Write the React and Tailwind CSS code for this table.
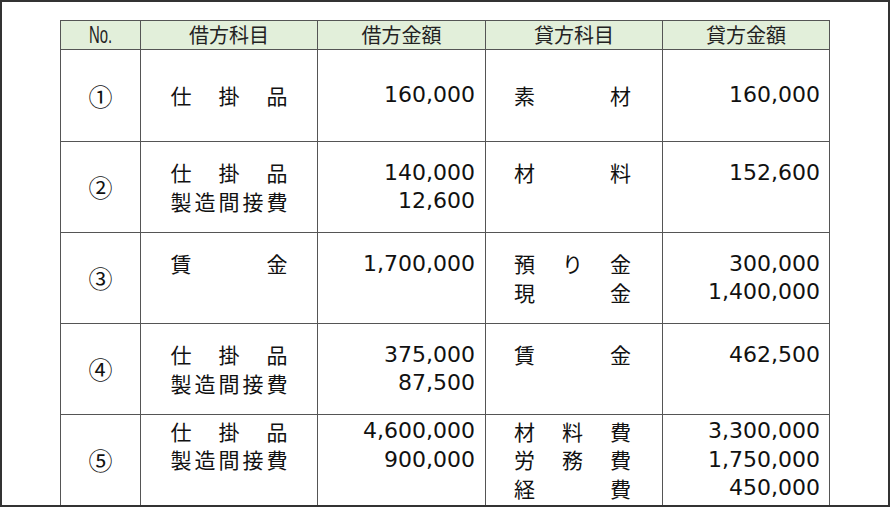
const rows = [
  {
    no: '①',
    lines: 1,
    dr: ['仕掛品'],
    drAmt: ['160,000'],
    cr: ['素材'],
    crAmt: ['160,000'],
  },
  {
    no: '②',
    lines: 2,
    dr: ['仕掛品', '製造間接費'],
    drAmt: ['140,000', '12,600'],
    cr: ['材料'],
    crAmt: ['152,600'],
  },
  {
    no: '③',
    lines: 2,
    dr: ['賃金'],
    drAmt: ['1,700,000'],
    cr: ['預り金', '現金'],
    crAmt: ['300,000', '1,400,000'],
  },
  {
    no: '④',
    lines: 2,
    dr: ['仕掛品', '製造間接費'],
    drAmt: ['375,000', '87,500'],
    cr: ['賃金'],
    crAmt: ['462,500'],
  },
  {
    no: '⑤',
    lines: 3,
    dr: ['仕掛品', '製造間接費'],
    drAmt: ['4,600,000', '900,000'],
    cr: ['材料費', '労務費', '経費'],
    crAmt: ['3,300,000', '1,750,000', '450,000'],
  },
]

const jp = "font-['Noto_Sans_CJK_JP',sans-serif]"
const num = "font-['DejaVu_Sans',sans-serif]"

// 均等割り付け
function Spread({ text }) {
  return (
    <div className="flex justify-between w-[117px] h-[28.5px] items-center">
      {text.split('').map((c, i) => (
        <span key={i}>{c}</span>
      ))}
    </div>
  )
}

function Block({ lines, children, className }) {
  return (
    <div className={className} style={{ height: lines * 28.5 }}>
      {children}
    </div>
  )
}

export default function App() {
  return (
    <div className="w-[890px] h-[507px] border-2 border-[#333] bg-white overflow-hidden text-[#111]">
      <table className="ml-[58px] mt-[18px] w-[769px] table-fixed border-collapse">
        <colgroup>
          <col className="w-[80px]" />
          <col className="w-[177px]" />
          <col className="w-[168px]" />
          <col className="w-[177px]" />
          <col className="w-[167px]" />
        </colgroup>
        <thead>
          <tr className={`h-[29px] bg-[#e2efda] text-[20px] leading-none text-[#222] ${jp}`}>
            <th className="border border-[#555] font-normal p-0 h-[29px]">
              <span className="inline-block scale-x-[0.62] text-[24px] font-['Liberation_Sans',sans-serif]">No.</span>
            </th>
            <th className="border border-[#555] font-normal p-0">借方科目</th>
            <th className="border border-[#555] font-normal p-0">借方金額</th>
            <th className="border border-[#555] font-normal p-0">貸方科目</th>
            <th className="border border-[#555] font-normal p-0">貸方金額</th>
          </tr>
        </thead>
        <tbody>
          {rows.map((r, i) => (
            <tr key={i} className={i === 0 ? 'h-[92px]' : 'h-[91px]'}>
              <td className={`border border-[#555] p-0 text-center align-middle text-[24px] leading-none ${jp}`}>
                {r.no}
              </td>
              <td className={`border border-[#555] p-0 align-middle text-[21px] ${jp}`}>
                <Block lines={r.lines} className="flex flex-col items-center">
                  {r.dr.map((t, j) => (
                    <Spread key={j} text={t} />
                  ))}
                </Block>
              </td>
              <td className={`border border-[#555] p-0 align-middle text-right pr-[10px] text-[22px] ${num}`}>
                <Block lines={r.lines}>
                  {r.drAmt.map((t, j) => (
                    <div key={j} className="h-[28.5px] leading-[28.5px]">{t}</div>
                  ))}
                </Block>
              </td>
              <td className={`border border-[#555] p-0 align-middle pl-[28px] text-[21px] ${jp}`}>
                <Block lines={r.lines} className="flex flex-col">
                  {r.cr.map((t, j) => (
                    <Spread key={j} text={t} />
                  ))}
                </Block>
              </td>
              <td className={`border border-[#555] p-0 align-middle text-right pr-[9px] text-[22px] ${num}`}>
                <Block lines={r.lines}>
                  {r.crAmt.map((t, j) => (
                    <div key={j} className="h-[28.5px] leading-[28.5px]">{t}</div>
                  ))}
                </Block>
              </td>
            </tr>
          ))}
        </tbody>
      </table>
    </div>
  )
}
